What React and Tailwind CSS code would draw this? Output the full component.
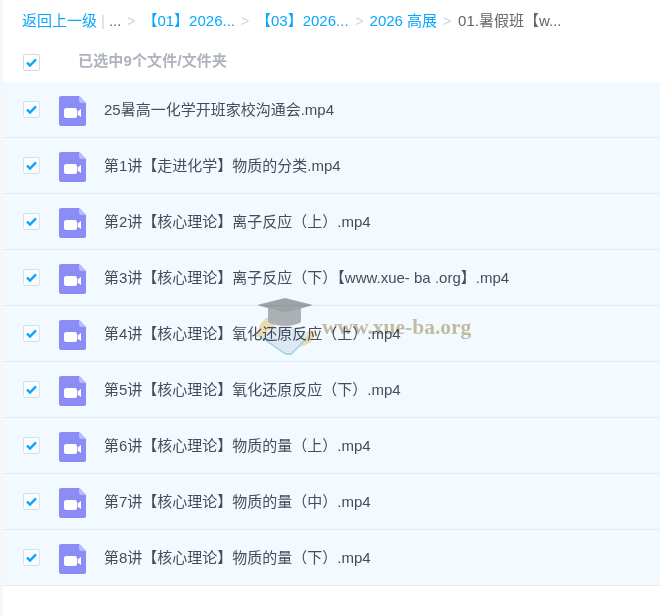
const files = [
  '25暑高一化学开班家校沟通会.mp4',
  '第1讲【走进化学】物质的分类.mp4',
  '第2讲【核心理论】离子反应（上）.mp4',
  '第3讲【核心理论】离子反应（下）【www.xue- ba .org】.mp4',
  '第4讲【核心理论】氧化还原反应（上）.mp4',
  '第5讲【核心理论】氧化还原反应（下）.mp4',
  '第6讲【核心理论】物质的量（上）.mp4',
  '第7讲【核心理论】物质的量（中）.mp4',
  '第8讲【核心理论】物质的量（下）.mp4',
]

const fontStack = "font-['Liberation_Sans','Noto_Sans_CJK_SC',sans-serif]"

function Check({ light }) {
  return (
    <div className={`w-[17px] h-[17px] rounded-[2px] border flex items-center justify-center shrink-0 ${light ? 'bg-white border-[#d4d7de]' : 'bg-[#fbfdff] border-[#d5e0ea]'}`}>
      <svg width="13" height="11" viewBox="0 0 13 11" fill="none">
        <path d="M2 5.6 L5 8.6 L11 2.4" stroke="#06a7ff" strokeWidth="2.4" />
      </svg>
    </div>
  )
}

function VideoIcon() {
  return (
    <svg width="27" height="30" viewBox="0 0 27 30" className="shrink-0 block">
      <path d="M2 0 H20 L27 7 V28 a2 2 0 0 1 -2 2 H2 a2 2 0 0 1 -2 -2 V2 a2 2 0 0 1 2 -2 Z" fill="#8b8cf5" />
      <path d="M20 0 L27 7 H22 a2 2 0 0 1 -2 -2 Z" fill="#b9baf9" />
      <rect x="5" y="12" width="13" height="10" rx="2" fill="#fff" />
      <path d="M18.5 15.6 L22 13 V21 L18.5 18.4 Z" fill="#fff" />
    </svg>
  )
}

function Sep() {
  return <span className="text-[#c8d4e8] w-[8px] flex justify-center text-[14px]">&gt;</span>
}

function Watermark() {
  return (
    <div className="absolute left-[255px] top-[296px] flex items-start pointer-events-none mix-blend-multiply">
      <svg width="68" height="60" viewBox="0 0 68 60">
        <path d="M2 40 C3 28 10 21 18 19 L20 30 C12 33 10 38 12 46 Z" fill="#f2d48e" opacity="0.7" />
        <path d="M46 38 C54 35 60 33 60 37 C60 44 54 49 44 51 Z" fill="#f2d48e" opacity="0.7" />
        <path d="M6 40 L30 28 L54 38 L34 58 Z" fill="#e8eef2" />
        <path d="M6 41 L31 58 L36 58 L52 42" stroke="#b5d8ee" strokeWidth="2" fill="none" />
        <path d="M13 12 L30 17 L46 12 V26 C40 31 20 31 13 26 Z" fill="#b4b4b4" />
        <path d="M2 9 L30 2 L58 9 L30 17 Z" fill="#a6a6a6" />
      </svg>
      <span className="ml-[-1px] mt-[20px] font-['Liberation_Serif',serif] font-bold text-[21.5px] leading-[22px] text-[#cbbf9f] whitespace-nowrap">www.xue-ba.org</span>
    </div>
  )
}

export default function App() {
  return (
    <div className={`relative w-[660px] h-[616px] bg-white pl-[3px] text-[15px] ${fontStack}`}>
      <div className="absolute left-0 top-0 bottom-0 w-[3px] bg-[#f7f7f7]" />
      <div className="h-[42px] pl-[19px] flex items-center whitespace-nowrap">
        <span className="text-[#06a7ff]">返回上一级</span>
        <span className="text-[#c8d4e8] ml-[4px]">|</span>
        <span className="text-[#666] ml-[4px] mr-[6px]">...</span>
        <Sep />
        <span className="text-[#06a7ff] ml-[7px] mr-[6px]">【01】2026...</span>
        <Sep />
        <span className="text-[#06a7ff] ml-[7px] mr-[7px]">【03】2026...</span>
        <Sep />
        <span className="text-[#06a7ff] ml-[6px] mr-[6px]">2026 高展</span>
        <Sep />
        <span className="text-[#666] ml-[7px]">01.暑假班【w...</span>
      </div>
      <div className="h-[40px] pl-[20px] flex items-center">
        <Check light />
        <span className="ml-[38px] pb-[2px] text-[#afb3bf] font-bold tracking-[0.15px]">已选中9个文件/文件夹</span>
      </div>
      <ul>
        {files.map(name => (
          <li key={name} className="h-[56px] pl-[20px] flex items-center bg-[#f3faff] border-b border-[#e2ecf6]">
            <Check />
            <div className="ml-[19px] mt-[3px]"><VideoIcon /></div>
            <span className="ml-[18px] pt-[2px] text-[#454d5a] whitespace-nowrap">{name}</span>
          </li>
        ))}
      </ul>
      <Watermark />
    </div>
  )
}
